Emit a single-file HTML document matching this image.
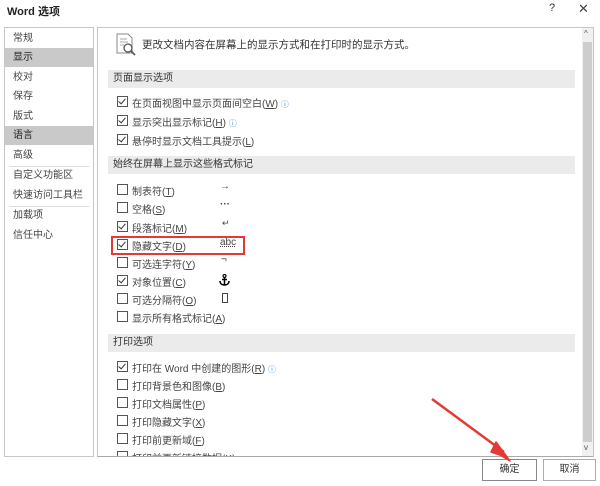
<!DOCTYPE html>
<html><head><meta charset="utf-8"><style>
body{margin:0;width:600px;height:486px;background:#fff;position:relative;overflow:hidden;font-family:"Liberation Sans","Noto Sans CJK SC",sans-serif;font-size:10px;color:#333}
.a{position:absolute;white-space:nowrap}
.side{position:absolute;left:4px;top:27px;width:88px;height:428px;border:1px solid #c6c6c6;background:#fff}
.si{position:absolute;left:0;width:88px;height:19px;line-height:19px;padding-left:8px;box-sizing:border-box;color:#444}
.sel{background:#c9c9c9;color:#222}
.sep{position:absolute;left:4px;width:80px;border-top:1px solid #ddd}
.main{position:absolute;left:97px;top:27px;width:495px;height:428px;border:1px solid #c6c6c6;border-bottom:1px solid #aaa;overflow:hidden}
.hd{position:absolute;left:10px;width:467px;height:18px;background:#ebebeb;line-height:18px;padding-left:5px;box-sizing:border-box;color:#333}
.cb{position:absolute;width:9px;height:9px;border:1px solid #555;background:#fff}
.cb.c::after{content:"";position:absolute;left:2px;top:0px;width:3px;height:6px;border:solid #333;border-width:0 1.3px 1.3px 0;transform:rotate(40deg)}
.lb{position:absolute;color:#444}
.btn{position:absolute;height:20px;border:1px solid #adadad;background:#fff;text-align:center;line-height:20px;color:#333}
</style></head><body>
<div class="a" style="left:7px;top:3px;font-size:11px;color:#222;font-weight:bold">Word 选项</div>
<div class="a" style="left:549px;top:2px;font-size:11px">?</div>
<div class="a" style="left:578px;top:1px;font-size:13px;color:#444">✕</div>
<div class="side">
<div class="si" style="top:1px">常规</div>
<div class="si sel" style="top:20px">显示</div>
<div class="si" style="top:40px">校对</div>
<div class="si" style="top:59px">保存</div>
<div class="si" style="top:79px">版式</div>
<div class="si sel" style="top:98px">语言</div>
<div class="si" style="top:118px">高级</div>
<div class="sep" style="top:138px"></div>
<div class="si" style="top:138px">自定义功能区</div>
<div class="si" style="top:158px">快速访问工具栏</div>
<div class="sep" style="top:178px"></div>
<div class="si" style="top:178px">加载项</div>
<div class="si" style="top:198px">信任中心</div>
</div>
<div class="main">
<svg class="a" style="left:17px;top:5px" width="22" height="24"><path d="M2 1h11l4 4v15H2z" fill="#fff" stroke="#888"/><path d="M5 6h7M5 9h8M5 12h4" stroke="#aaa"/><circle cx="13" cy="15" r="4" fill="#fff" stroke="#555" stroke-width="1.3"/><path d="M16 18l4 4" stroke="#555" stroke-width="1.6"/></svg>
<div class="a" style="left:44px;top:9px;font-size:10.5px">更改文档内容在屏幕上的显示方式和在打印时的显示方式。</div>
<div class="hd" style="top:42px">页面显示选项</div>
<div class="cb c" style="left:19px;top:68px"></div><div class="lb" style="left:34px;top:67px">在页面视图中显示页面间空白(<u>W</u>) <span style="color:#4a90d9;font-size:8px">ⓘ</span></div>
<div class="cb c" style="left:19px;top:87px"></div><div class="lb" style="left:34px;top:86px">显示突出显示标记(<u>H</u>) <span style="color:#4a90d9;font-size:8px">ⓘ</span></div>
<div class="cb c" style="left:19px;top:106px"></div><div class="lb" style="left:34px;top:105px">悬停时显示文档工具提示(<u>L</u>)</div>
<div class="hd" style="top:128px">始终在屏幕上显示这些格式标记</div>
<div class="cb" style="left:19px;top:156px"></div><div class="lb" style="left:34px;top:155px">制表符(<u>T</u>)</div><div class="lb" style="left:122px;top:153px">→</div>
<div class="cb" style="left:19px;top:174px"></div><div class="lb" style="left:34px;top:173px">空格(<u>S</u>)</div><div class="lb" style="left:122px;top:171px;font-weight:bold">···</div>
<div class="cb c" style="left:19px;top:193px"></div><div class="lb" style="left:34px;top:192px">段落标记(<u>M</u>)</div><div class="lb" style="left:124px;top:190px;font-size:9px">↵</div>
<div class="cb c" style="left:19px;top:211px"></div><div class="lb" style="left:34px;top:210px">隐藏文字(<u>D</u>)</div><div class="lb" style="left:122px;top:209px;text-decoration:underline dotted">abc</div>
<div class="cb" style="left:19px;top:229px"></div><div class="lb" style="left:34px;top:228px">可选连字符(<u>Y</u>)</div><div class="lb" style="left:123px;top:226px">¬</div>
<div class="cb c" style="left:19px;top:247px"></div><div class="lb" style="left:34px;top:246px">对象位置(<u>C</u>)</div>
<svg class="a" style="left:121px;top:246px" width="11" height="12"><circle cx="5.5" cy="2" r="1.5" fill="none" stroke="#000" stroke-width="1.2"/><path d="M5.5 3.5V11M3 5.5h5M1 7c0 3 2.5 4 4.5 4s4.5-1 4.5-4" fill="none" stroke="#000" stroke-width="1.5"/></svg>
<div class="cb" style="left:19px;top:265px"></div><div class="lb" style="left:34px;top:264px">可选分隔符(<u>O</u>)</div><div class="lb" style="left:124px;border:1px solid #444;width:4px;height:8px;top:265px"></div>
<div class="cb" style="left:19px;top:283px"></div><div class="lb" style="left:34px;top:282px">显示所有格式标记(<u>A</u>)</div>
<div class="hd" style="top:306px">打印选项</div>
<div class="cb c" style="left:19px;top:333px"></div><div class="lb" style="left:34px;top:332px">打印在 Word 中创建的图形(<u>R</u>) <span style="color:#4a90d9;font-size:8px">ⓘ</span></div>
<div class="cb" style="left:19px;top:351px"></div><div class="lb" style="left:34px;top:350px">打印背景色和图像(<u>B</u>)</div>
<div class="cb" style="left:19px;top:369px"></div><div class="lb" style="left:34px;top:368px">打印文档属性(<u>P</u>)</div>
<div class="cb" style="left:19px;top:387px"></div><div class="lb" style="left:34px;top:386px">打印隐藏文字(<u>X</u>)</div>
<div class="cb" style="left:19px;top:405px"></div><div class="lb" style="left:34px;top:404px">打印前更新域(<u>F</u>)</div>
<div class="cb" style="left:19px;top:423px"></div><div class="lb" style="left:34px;top:422px">打印前更新链接数据(<u>K</u>)</div>
<div class="a" style="left:484px;top:0;width:11px;height:428px;background:#f0f0f0"></div>
<div class="a" style="left:485px;top:14px;width:9px;height:400px;background:#cdcdcd"></div>
<div class="a" style="left:486px;top:1px;font-size:8px;color:#555">^</div>
<div class="a" style="left:486px;top:415px;font-size:8px;color:#555">v</div>
</div>
<div class="a" style="left:111px;top:236px;width:130px;height:15px;border:2px solid #e53935"></div>
<div class="btn" style="left:482px;top:459px;width:53px;border-color:#888">确定</div>
<div class="btn" style="left:543px;top:459px;width:51px">取消</div>
<svg class="a" style="left:0;top:0" width="600" height="486"><path d="M432 399L504 452" stroke="#e53935" stroke-width="2.5"/><path d="M496 442L510 461L500 455L491 452Z" fill="#e53935" stroke="#e53935" stroke-width="1.5" stroke-linejoin="round"/></svg>
</body></html>
